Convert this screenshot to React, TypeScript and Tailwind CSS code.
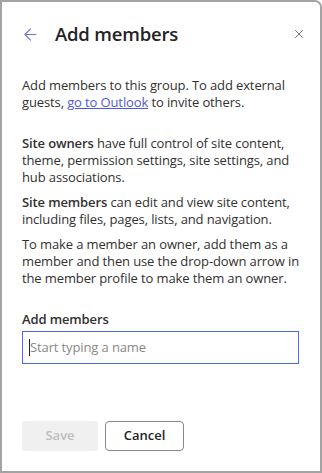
import { ArrowLeft, X } from "lucide-react";

export default function App() {
  return (
    <div
      className="flex h-[473px] w-[322px] flex-col rounded-tr-[7px] border-2 border-[#a3a3a3] bg-white text-[#323130]"
      style={{ fontFamily: '"Open Sans", "Noto Sans", sans-serif' }}
    >
      {/* Header */}
      <div className="mt-[20px] flex h-[24px] items-center pl-[19px] pr-[14px]">
        <ArrowLeft className="h-[19px] w-[19px] text-[#6f75e0]" strokeWidth={1.4} />
        <h1 className="ml-[15px] text-[18.5px] font-semibold tracking-[-0.2px] text-[#242424]">Add members</h1>
        <X className="ml-auto h-[14px] w-[14px] text-[#616161]" strokeWidth={1.5} />
      </div>

      <div className="px-5 text-[13px] leading-[17px] tracking-[-0.12px]">
        <p className="mt-[31px]">
          Add members to this group. To add external guests,{" "}
          <a href="#" className="text-[#4f5bd5] underline">
            go to Outlook
          </a>{" "}
          to invite others.
        </p>

        <p className="mt-[24px]">
          <span className="font-semibold">Site owners</span> have full control of site content, theme,
          permission settings, site settings, and hub associations.
        </p>
        <p className="mt-[8px]">
          <span className="font-semibold">Site members</span> can edit and view site content, including
          files, pages, lists, and navigation.
        </p>
        <p className="mt-[8px]">
          To make a member an owner, add them as a member and then use the drop-down arrow in the member
          profile to make them an owner.
        </p>

        <label className="mt-[24px] block font-semibold">Add members</label>
        <div className="mt-[3px] flex h-[33px] w-[277px] items-center border border-[#4f6bed] px-[6px]">
          <span className="h-[17px] w-px bg-[#242424]" />
          <span className="text-[#8a8886]">Start typing a name</span>
        </div>
      </div>

      {/* Footer */}
      <div className="mb-[20px] mt-auto flex gap-[7px] px-5">
        <button className="h-[30px] w-[76px] rounded-[4px] bg-[#f0f0f0] text-[13px] font-semibold text-[#bdbdbd]">
          Save
        </button>
        <button className="h-[30px] w-[79px] rounded-[4px] border border-[#8a8886] bg-white text-[13px] font-semibold text-[#242424]">
          Cancel
        </button>
      </div>
    </div>
  );
}
